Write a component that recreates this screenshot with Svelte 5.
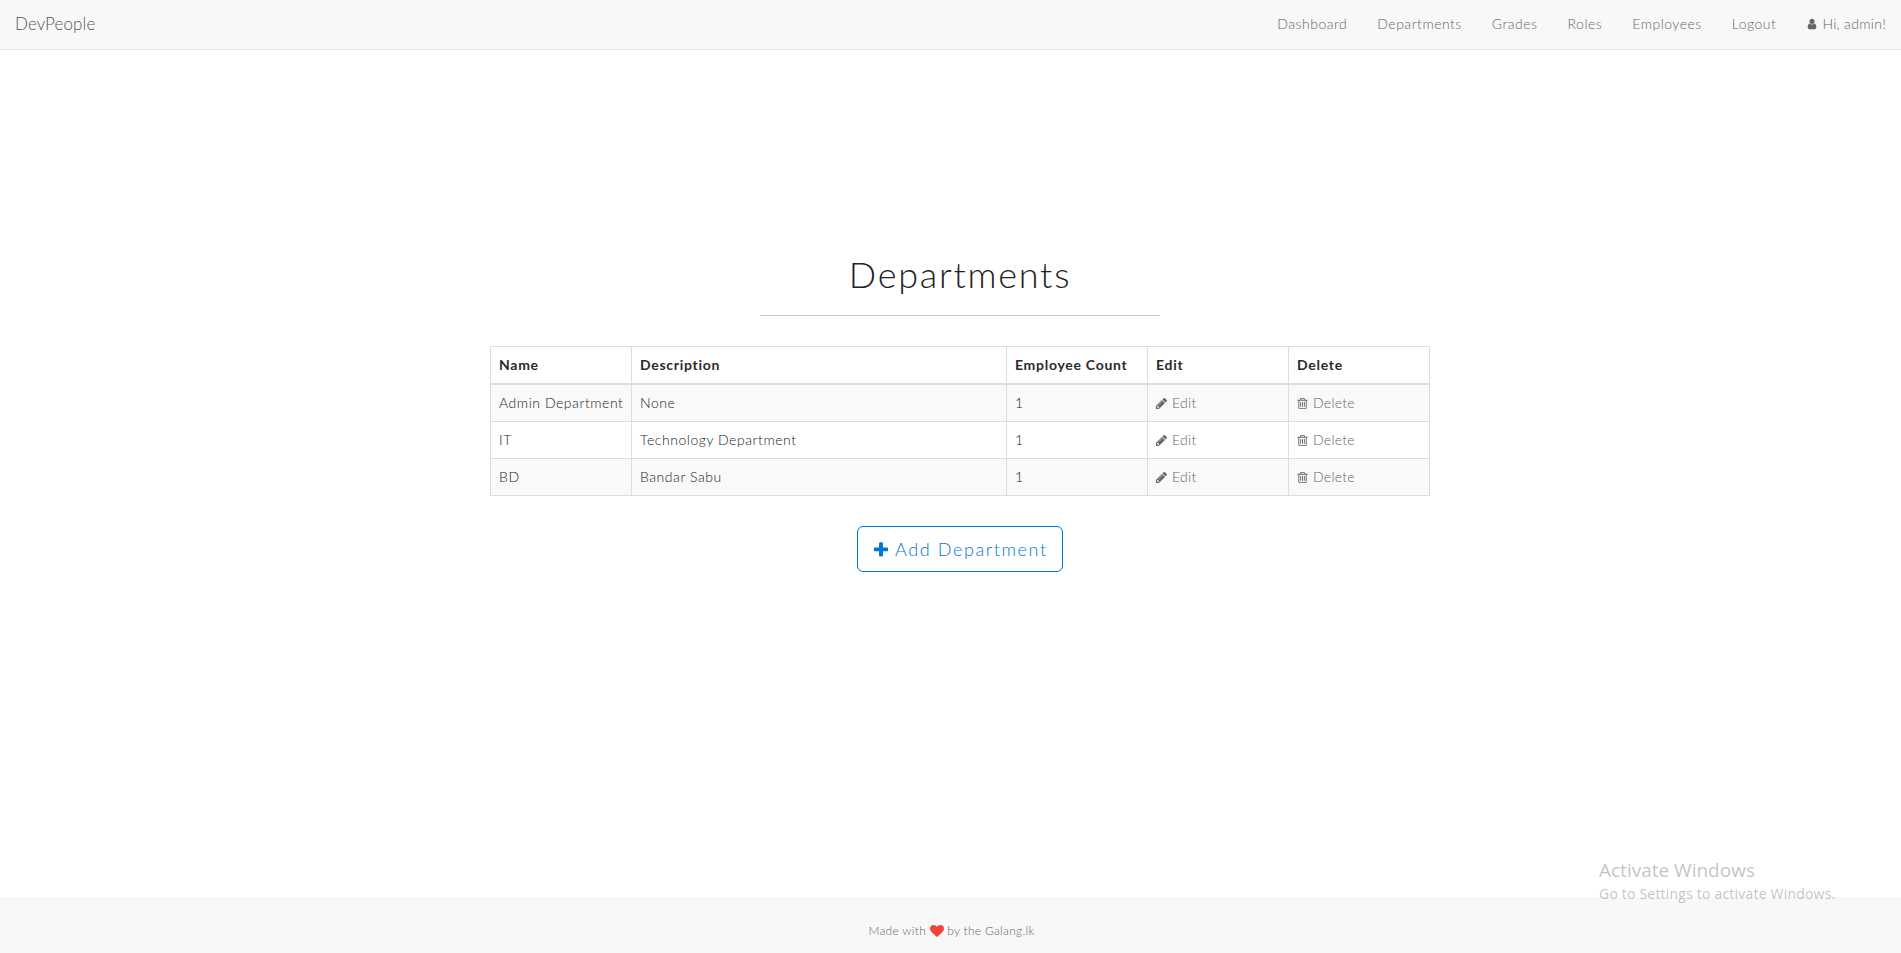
<script>
  const icons = {
    pencil: "M491 1536l91-91-235-235-91 91v107h128v128h107zm523-928q0-22-22-22-10 0-17 7l-542 542q-7 7-7 17 0 22 22 22 10 0 17-7l542-542q7-7 7-17zm-54-192l416 416-832 832h-416v-416zm683 96q0 53-37 90l-166 166-416-416 166-165q36-38 90-38 53 0 91 38l235 234q37 39 37 91z",
    trash: "M704 736v576q0 14-9 23t-23 9h-64q-14 0-23-9t-9-23v-576q0-14 9-23t23-9h64q14 0 23 9t9 23zm256 0v576q0 14-9 23t-23 9h-64q-14 0-23-9t-9-23v-576q0-14 9-23t23-9h64q14 0 23 9t9 23zm256 0v576q0 14-9 23t-23 9h-64q-14 0-23-9t-9-23v-576q0-14 9-23t23-9h64q14 0 23 9t9 23zm128 724v-948h-896v948q0 22 7 40.5t14.5 27 10.5 8.5h832q3 0 10.5-8.5t14.5-27 7-40.5zm-672-1076h448l-48-117q-7-9-17-11h-317q-10 2-17 11zm928 32v64q0 14-9 23t-23 9h-96v948q0 83-47 143.5t-113 60.5h-832q-66 0-113-58.5t-47-141.5v-952h-96q-14 0-23-9t-9-23v-64q0-14 9-23t23-9h309l70-167q15-37 54-63t79-26h320q40 0 79 26t54 63l70 167h309q14 0 23 9t9 23z",
    user: "M1536 1399q0 109-62.5 187t-150.5 78h-854q-88 0-150.5-78t-62.5-187q0-85 8.5-160.5t31.5-152 58.5-131 94-89 134.5-34.5q131 128 313 128t313-128q76 0 134.5 34.5t94 89 58.5 131 31.5 152 8.5 160.5zm-256-887q0 159-112.5 271.5t-271.5 112.5-271.5-112.5-112.5-271.5 112.5-271.5 271.5-112.5 271.5 112.5 112.5 271.5z",
    plus: "M1600 736v192q0 40-28 68t-68 28h-416v416q0 40-28 68t-68 28h-192q-40 0-68-28t-28-68v-416h-416q-40 0-68-28t-28-68v-192q0-40 28-68t68-28h416v-416q0-40 28-68t68-28h192q40 0 68 28t28 68v416h416q40 0 68 28t28 68z",
    heart: "M896 1664q-26 0-44-18l-624-602q-10-8-27.5-26t-55.5-65.5-68-97.5-53.5-121-23.5-138q0-220 127-344t351-124q62 0 126.5 21.5t120 58 95.5 68.5 76 68q36-36 76-68t95.5-68.5 120-58 126.5-21.5q224 0 351 124t127 344q0 221-229 450l-623 600q-18 18-44 18z"
  };
  const links = ["Dashboard", "Departments", "Grades", "Roles", "Employees", "Logout"];
  const rows = [
    ["Admin Department", "None", "1"],
    ["IT", "Technology Department", "1"],
    ["BD", "Bandar Sabu", "1"]
  ];
</script>

{#snippet icon(name, cls)}
  <svg class="icon {cls}" viewBox="0 0 1792 1792" aria-hidden="true"><path d={icons[name]} /></svg>
{/snippet}

<div class="page">
  <nav class="navbar">
    <a class="brand" href="#top">DevPeople</a>
    <ul>
      {#each links as l}
        <li><a href="#top">{l}</a></li>
      {/each}
      <li class="hi"><a href="#top">{@render icon("user", "user")} Hi, admin!</a></li>
    </ul>
  </nav>

  <main>
    <h1>Departments</h1>
    <hr />
    <table>
      <thead>
        <tr>
          <th class="c1">Name</th>
          <th class="c2">Description</th>
          <th class="c1">Employee Count</th>
          <th class="c1">Edit</th>
          <th class="c1">Delete</th>
        </tr>
      </thead>
      <tbody>
        {#each rows as r}
          <tr>
            <td>{r[0]}</td>
            <td>{r[1]}</td>
            <td>{r[2]}</td>
            <td><a href="#top">{@render icon("pencil", "act")} Edit</a></td>
            <td><a href="#top">{@render icon("trash", "act")} Delete</a></td>
          </tr>
        {/each}
      </tbody>
    </table>
    <button type="button">{@render icon("plus", "plus")} Add Department</button>
  </main>

  <footer>
    <p>Made with {@render icon("heart", "heart")} by the Galang.lk</p>
  </footer>

  <div class="activate">
    <div class="a1">Activate Windows</div>
    <div class="a2">Go to Settings to activate Windows.</div>
  </div>
</div>

<style>
  :global(body) {
    margin: 0;
    background: #fff;
    font-family: Lato, "Open Sans", sans-serif;
    font-size: 14px;
    line-height: 20px;
    color: #333;
  }
  a { text-decoration: none; color: inherit; }
  .page {
    position: relative;
    min-height: 953px;
    display: flex;
    flex-direction: column;
    overflow: hidden;
  }
  .navbar {
    height: 47px;
    padding-bottom: 2px;
    background: #f8f8f8;
    border-bottom: 1px solid #e7e7e7;
    display: flex;
    justify-content: space-between;
    align-items: center;
    color: #666;
  }
  .brand {
    margin-left: 15px;
    font-size: 17px;
    font-weight: 300;
    letter-spacing: 0.1px;
    color: #555;
  }
  ul {
    list-style: none;
    display: flex;
    margin: 0;
    padding: 0;
  }
  li { padding: 0 15px; letter-spacing: 0.5px; font-weight: 300; }
  .hi { letter-spacing: 0.3px; }
  .icon { fill: currentColor; display: inline-block; }
  .user { width: 12px; height: 14px; vertical-align: -2px; }
  main {
    width: 940px;
    margin: 0 0 0 490px;
    padding-top: 204px;
    display: flex;
    flex-direction: column;
    align-items: center;
  }
  h1 {
    margin: 0;
    font-size: 36px;
    line-height: 40px;
    font-weight: 300;
    letter-spacing: 1.75px;
    color: #222;
  }
  hr {
    width: 400px;
    margin: 21px 0 30px;
    border: 0;
    border-top: 1px solid #ccc;
    height: 0;
  }
  table {
    width: 940px;
    table-layout: fixed;
    border-collapse: collapse;
    border: 1px solid #ddd;
  }
  .c1 { width: 141px; }
  .c2 { width: 375px; }
  th, td {
    border: 1px solid #ddd;
    padding: 8px;
    text-align: left;
    box-sizing: border-box;
    white-space: nowrap;
  }
  th { border-bottom-width: 2px; font-weight: 700; letter-spacing: 0.72px; color: #2a2a2a; }
  td { font-weight: 300; letter-spacing: 0.55px; color: #222; }
  tbody tr:nth-child(odd) { background: #f9f9f9; }
  td a { color: #666; font-weight: 300; letter-spacing: 0.25px; }
  .act { width: 13px; height: 13px; vertical-align: -2px; margin-left: -1px; }
  button {
    margin-top: 30px;
    width: 206px;
    height: 46px;
    background: #fff;
    border: 1px solid #0275d8;
    border-radius: 6px;
    color: #0275d8;
    font-family: inherit;
    font-size: 18px;
    font-weight: 300;
    letter-spacing: 1.6px;
    padding: 0;
  }
  .plus { width: 18px; height: 18px; vertical-align: -3px; margin-right: -1px; }
  footer {
    margin-top: auto;
    height: 56px;
    background: #f8f8f8;
    display: flex;
    align-items: center;
    justify-content: center;
  }
  footer p {
    margin: 0 -2px 0 0;
    font-size: 12px;
    color: #666;
    font-weight: 300;
    letter-spacing: 0.3px;
    transform: translateY(6px);
  }
  .heart { width: 14px; height: 14px; vertical-align: -3px; fill: #f44336; }
  .activate {
    position: absolute;
    left: 1599px;
    top: 858px;
    color: rgba(120, 120, 120, 0.45);
    font-family: "Open Sans", sans-serif;
    font-weight: 400;
  }
  .a1 { font-size: 19px; line-height: 24px; }
  .a2 { font-size: 14px; line-height: 20px; margin-top: 2px; letter-spacing: 0.2px; }
</style>
